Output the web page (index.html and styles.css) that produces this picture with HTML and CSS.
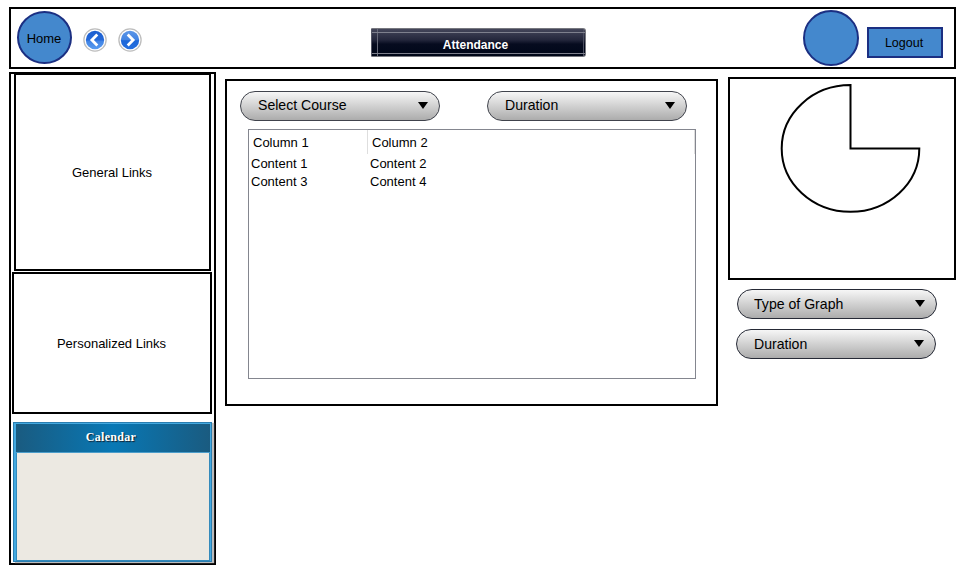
FILE: index.html
```html
<!DOCTYPE html>
<html lang="en">
<head>
<meta charset="utf-8">
<title>Attendance</title>
<link rel="stylesheet" href="styles.css">
</head>
<body>
<header class="topbar">
  <a class="circle home">Home</a>
  <svg class="nav back" width="24" height="24" viewBox="0 0 24 24">
    <defs>
      <linearGradient id="blue-up" x1="0" y1="0" x2="0" y2="1"><stop offset="0" stop-color="#1c5fd0"/><stop offset=".5" stop-color="#2468d8"/><stop offset=".56" stop-color="#3f82e4"/><stop offset="1" stop-color="#5a9cf0"/></linearGradient>
      <linearGradient id="blue-down" x1="0" y1="0" x2="0" y2="1"><stop offset="0" stop-color="#5b96e8"/><stop offset=".48" stop-color="#4384e2"/><stop offset=".54" stop-color="#1c66d8"/><stop offset="1" stop-color="#256fdf"/></linearGradient>
    </defs>
    <circle cx="12" cy="12" r="11.1" fill="#fff" stroke="#bdbdbd" stroke-width="1.3"/>
    <circle cx="12" cy="12" r="9.2" fill="url(#blue-up)"/>
    <path d="M14.3 6.6 8.9 12l5.4 5.4" fill="none" stroke="#fff" stroke-width="2.8"/>
  </svg>
  <svg class="nav forward" width="24" height="24" viewBox="0 0 24 24">
    <circle cx="12" cy="12" r="11.1" fill="#fff" stroke="#bdbdbd" stroke-width="1.3"/>
    <circle cx="12" cy="12" r="9.2" fill="url(#blue-down)"/>
    <path d="M9.7 6.6l5.4 5.4-5.4 5.4" fill="none" stroke="#fff" stroke-width="2.8"/>
  </svg>
  <h1 class="title">Attendance</h1>
  <div class="circle avatar"></div>
  <a class="logout">Logout</a>
</header>
<main class="columns">
  <aside class="sidebar">
    <section class="links general">General Links</section>
    <section class="links personal">Personalized Links</section>
    <section class="calendar"><h2>Calendar</h2></section>
  </aside>
  <section class="report">
    <div class="filters">
      <div class="select"><span>Select Course</span><i class="arrow"></i></div>
      <div class="select"><span>Duration</span><i class="arrow"></i></div>
    </div>
    <div class="grid">
      <div class="row head"><span>Column 1</span><span>Column 2</span></div>
      <div class="row"><span>Content 1</span><span>Content 2</span></div>
      <div class="row"><span>Content 3</span><span>Content 4</span></div>
    </div>
  </section>
  <section class="graph">
    <div class="chart">
      <svg width="224" height="199" viewBox="0 0 224 199">
        <path d="M120.5 6.1V69.4H189.3A68.8 63.3 0 1 1 120.5 6.1Z" fill="#fff" stroke="#000" stroke-width="2"/>
      </svg>
    </div>
    <div class="select kind"><span>Type of Graph</span><i class="arrow"></i></div>
    <div class="select span"><span>Duration</span><i class="arrow"></i></div>
  </section>
</main>
</body>
</html>
```
FILE: styles.css
```css
* { box-sizing: border-box; }
body {
  margin: 0;
  padding: 7px 0 0 9px;
  width: 968px;
  height: 570px;
  overflow: hidden;
  background: #fff;
  color: #000;
  font: 13px/16px "Liberation Sans", Arial, sans-serif;
}
.topbar {
  display: flex;
  align-items: flex-start;
  width: 947px;
  height: 62px;
  border: 2px solid #000;
}
.circle {
  display: flex;
  align-items: center;
  justify-content: center;
  border: 2px solid #1b2f82;
  border-radius: 50%;
  background: #4488cd;
}
.home { width: 55px; height: 53px; margin: 2px 0 0 6px; padding: 2px 1px 0 0; }
.nav { margin-top: 19px; }
.back { margin-left: 11px; }
.forward { margin-left: 11px; }
.title {
  width: 215px;
  height: 29px;
  margin: 19px 0 0 229px;
  padding-right: 6px;
  border: 1px solid #77787f;
  border-left: 1px solid #555766;
  border-radius: 1px 3px 3px 1px;
  background:
    linear-gradient(#7e808d, #7e808d) 0 3px / 100% 1px no-repeat,
    linear-gradient(#7e808d, #7e808d) 0 24px / 100% 1px no-repeat,
    linear-gradient(#666978, #666978) 5px 0 / 1px 100% no-repeat,
    linear-gradient(#4c4f60, #4c4f60) 211px 0 / 1px 100% no-repeat,
    linear-gradient(#44465a 0, #24273c 40%, #060b1f 56%, #000718 100%);
  color: #fff;
  font-size: 12px;
  line-height: 32px;
  text-align: center;
}
.avatar { width: 56px; height: 56px; margin: 1px 0 0 217px; }
.logout {
  width: 76px;
  height: 31px;
  margin: 18px 0 0 8px;
  border: 2px solid #1b2f82;
  padding-right: 2px;
  background: #4488cd;
  font-size: 12.5px;
  line-height: 28px;
  text-align: center;
}
.columns { display: flex; align-items: flex-start; }
.sidebar {
  width: 207px;
  height: 493px;
  margin-top: 3px;
  border: 2px solid #000;
}
.links {
  display: flex;
  align-items: center;
  justify-content: center;
  padding: 2px 1px 0 0;
  border: 2px solid #000;
}
.general { width: 197px; height: 198px; margin: -1px 0 0 3px; }
.personal { width: 200px; height: 142px; margin: 1px 0 0 1px; }
.calendar {
  width: 199px;
  height: 140px;
  margin: 8px 0 0 2px;
  border: 1px solid #2b7eb0;
  padding: 1px 1px 1px 2px;
  background: #43a9e0;
  box-shadow: 2px 1px 1px #bbb;
}
.calendar h2 {
  height: 29px;
  margin: 0;
  padding-right: 4px;
  border-bottom: 1px solid #4b9dca;
  background: linear-gradient(90deg, #1a5b80, #0878b5 50%, #1a5b80);
  color: #fff;
  font: bold 12px/26px "Liberation Serif", "Times New Roman", serif;
  letter-spacing: .3px;
  text-align: center;
  text-shadow: 1px 1px 1px #123;
}
.calendar::after {
  content: "";
  display: block;
  height: 107px;
  border: 1px solid #348abb;
  border-top: 0;
  background: #ece9e2;
}
.report {
  width: 493px;
  height: 327px;
  margin: 10px 0 0 9px;
  border: 2px solid #000;
  padding: 10px 0 0 13px;
}
.filters { display: flex; gap: 47px; }
.select {
  display: flex;
  align-items: center;
  justify-content: space-between;
  width: 200px;
  height: 30px;
  padding: 0 11px 2px 17px;
  border: 1px solid #40434c;
  border-radius: 15px;
  background: linear-gradient(#f6f6f6, #acacac);
  font-size: 14.1px;
}
.arrow {
  border: 5px solid transparent;
  border-top: 7px solid #000;
  border-bottom: 0;
}
.grid {
  width: 448px;
  height: 250px;
  margin: 8px 0 0 8px;
  border: 1px solid #84868f;
}
.row { display: grid; grid-template-columns: 119px 1fr; height: 18px; padding-left: 2px; line-height: 18px; }
.head {
  height: 24px;
  margin-bottom: 1px;
  padding: 0;
  line-height: 25px;
  border-right: 1px solid #dedede;
}
.head span { height: 24px; padding-left: 4px; }
.head span:first-child { border-right: 1px solid #dedede; }
.graph { width: 229px; margin: 8px 0 0 10px; }
.chart { width: 228px; height: 203px; border: 2px solid #000; }
.chart svg { display: block; }
.graph .select { border-color: #262a36; }
.graph .select span { padding-top: 2px; }
.kind { margin: 9px 0 0 9px; padding-left: 16px; }
.span { margin: 10px 0 0 8px; }
```
